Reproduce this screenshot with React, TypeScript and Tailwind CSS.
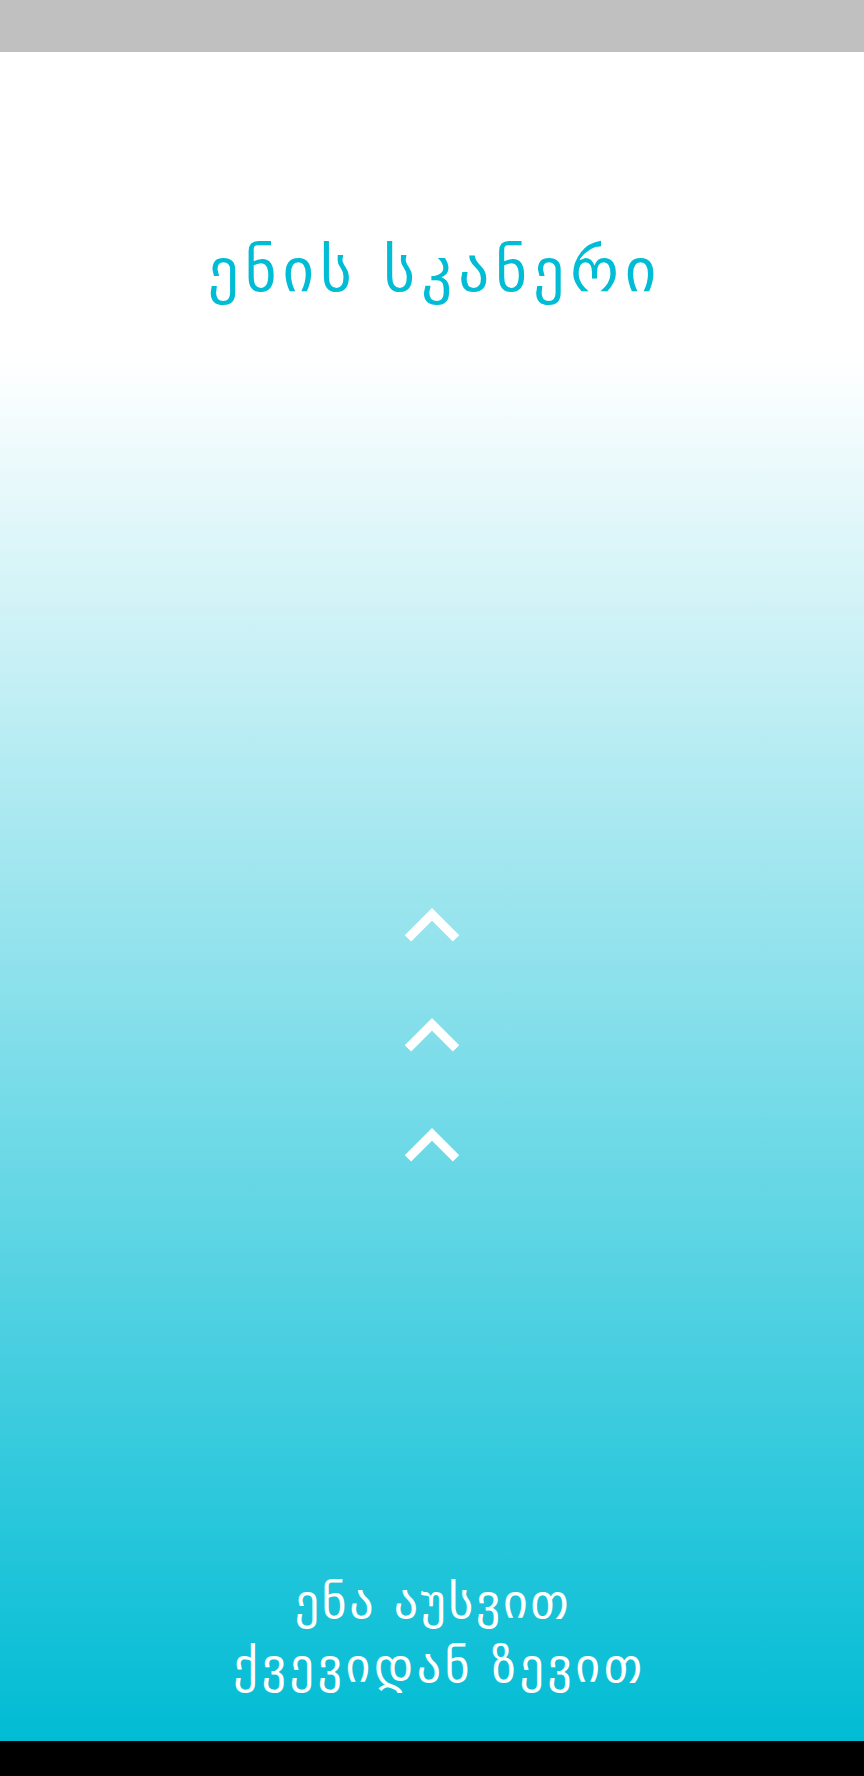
const Chevron = () => (
  <svg width="54" height="36" viewBox="0 0 54 36" fill="none">
    <polyline points="3,30.4 27,6.4 51,30.4" stroke="white" strokeWidth="9" strokeLinecap="butt" strokeLinejoin="miter" />
  </svg>
);

export default function App() {
  return (
    <div className="flex h-[1776px] w-[864px] flex-col font-['DejaVu_Sans',sans-serif]">
      <div className="h-[52px] shrink-0 bg-[#c0c0c0]" />

      <div className="flex h-[303px] shrink-0 flex-col items-center bg-white pt-[187px]">
        <h1 className="pl-[6px] text-[61px] leading-none font-normal tracking-[6px] text-[#00bcd4]">ენის სკანერი</h1>
      </div>

      <div className="flex flex-1 flex-col items-center bg-[linear-gradient(to_bottom,#ffffff,#00bcd4)]">
        <div className="mt-[553px] flex flex-col items-center gap-[74px]">
          <Chevron />
          <Chevron />
          <Chevron />
        </div>
        <div className="mt-auto pb-[44px] text-center text-[48px] leading-[64px] text-white">
          <p className="pl-[2px] tracking-[2.5px]">ენა აუსვით</p>
          <p className="pl-[15px] tracking-[3.5px]">ქვევიდან ზევით</p>
        </div>
      </div>

      <div className="h-[35px] shrink-0 bg-black" />
    </div>
  );
}
